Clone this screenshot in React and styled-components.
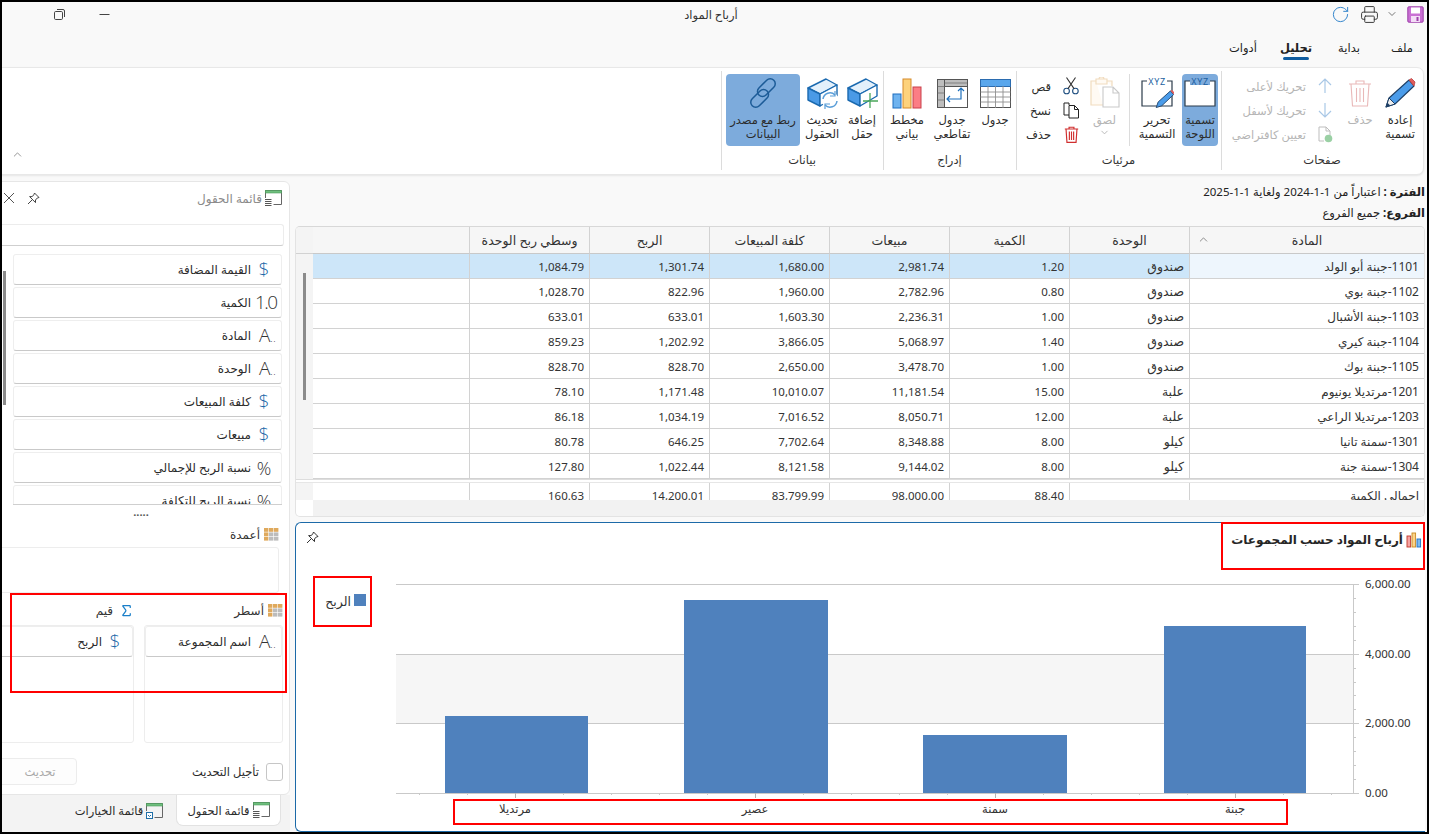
import React from 'react';
import styled, { createGlobalStyle } from 'styled-components';
import { RotateCw, Printer, ChevronDown, ChevronUp, Sigma } from 'lucide-react';

const Global = createGlobalStyle`
  html, body { margin: 0; padding: 0; background: #fff; }
  body { font-family: "Noto Sans", "DejaVu Sans", sans-serif; font-size: 12px; color: #2b2b2b; }
  * { box-sizing: border-box; }
`;

const Frame = styled.div`
  position: relative; width: 1429px; height: 834px; overflow: hidden;
  border: 2px solid #000; background: #f9f9f9; display: flex; flex-direction: column;
`;
const TitleBar = styled.header`
  height: 28px; flex: none; display: grid; grid-template-columns: 1fr auto 1fr; align-items: center; direction: ltr; padding-bottom: 4px;
`;
const WinButtons = styled.div`display: flex; align-items: center; gap: 34px; padding-left: 52px; color: #444;`;
const WinTitle = styled.div`font-size: 11.5px; color: #333; text-align: center; padding-right: 7px;`;
const QuickTools = styled.div`display: flex; justify-content: flex-end; align-items: center; padding-right: 3px;`;
const ToolSlot = styled.span`display: flex; margin-right: ${p => p.$mr || 0}px;`;
const TabRow = styled.nav`
  height: 37px; flex: none; display: flex; direction: rtl; gap: 3px; padding-top: 5px;
`;
const Tab = styled.div`
  width: 50px; height: 25px; display: flex; align-items: center; justify-content: center; position: relative;
  font-size: 11.5px; font-weight: ${p => (p.$active ? 700 : 400)}; color: #222;
  &::after { content: ""; display: ${p => (p.$active ? 'block' : 'none')}; position: absolute; bottom: 0; left: 12px; right: 12px; height: 3px; border-radius: 2px; background: #0f5c9f; }
`;
const Ribbon = styled.section`
  height: 108px; flex: none; margin: 0 3px 0 -6px; display: flex; direction: rtl; position: relative;
  background: #fff; border: 1px solid #e8e8e8; border-radius: 7px; box-shadow: 0 1px 2px rgba(0,0,0,.08);
`;
const Group = styled.div`
  display: flex; flex-direction: column; width: ${p => p.$w}px; flex: none; padding: 6px 3px 0 3px; position: relative;
  &::after { content: ""; position: absolute; left: 0; top: 3px; bottom: 4px; width: 1px; background: #dcdcdc; }
`;
const GroupBody = styled.div`display: flex; height: 72px;`;
const GroupLabel = styled.div`text-align: center; font-size: 11.5px; color: #333; padding-top: 6px;`;
const BigButton = styled.div`
  width: ${p => p.$w}px; flex: none; height: 72px; display: flex; flex-direction: column; align-items: center;
  padding-top: 3px; border-radius: 4px; background: ${p => (p.$on ? '#7dabdc' : 'transparent')};
  color: ${p => (p.$off ? '#b5b5b5' : '#2b2b2b')}; font-size: 11.5px; line-height: 14px; text-align: center;
`;
const BigIcon = styled.div`height: 32px; flex: none; margin-bottom: 4px; display: flex; align-items: center; justify-content: center;`;
const GroupSep = styled.div`width: 1px; flex: none; background: #dcdcdc; margin: 0 2px 0 1px;`;
const SmallColumn = styled.div`width: ${p => p.$w}px; flex: none; display: flex; flex-direction: column; padding-top: 0;`;
const SmallButton = styled.div`
  height: 25px; display: flex; align-items: center; gap: ${p => p.$gap || 8}px; padding-right: ${p => p.$pad || 6}px;
  color: ${p => (p.$off ? '#b5b5b5' : '#2b2b2b')}; font-size: 11.5px; white-space: nowrap;
`;
const SmallIcon = styled.span`width: 18px; flex: none; display: flex; justify-content: center;`;
const Collapse = styled.span`position: absolute; left: 14px; bottom: 13px; color: #777; display: flex;`;

const Workspace = styled.main`flex: 1; min-height: 0; display: flex; direction: ltr; padding-top: 6px;`;
const LeftCol = styled.aside`width: 288px; flex: none; display: flex; flex-direction: column; direction: rtl; overflow: hidden;`;
const PanelCard = styled.div`
  flex: 1; min-height: 0; margin-left: -10px; background: #fff; border: 1px solid #e6e6e6; border-radius: 6px; display: flex; flex-direction: column; position: relative; overflow: hidden;
`;
const PanelHead = styled.div`height: 34px; flex: none; display: flex; align-items: center; padding: 0 7px 2px; gap: 3px; color: #8a8a8a; font-size: 12px;`;
const HeadSpacer = styled.div`flex: 1;`;
const HeadTool = styled.span`display: flex; margin-left: ${p => p.$ml || 0}px; color: #666;`;
const SearchBox = styled.div`height: 22px; flex: none; margin: 8px 5px 8px 0; background: #fff; border: 1px solid #ececec; border-bottom-color: #cfcfcf; border-radius: 3px;`;
const FieldList = styled.div`height: 251px; flex: none; overflow: hidden; margin: 0 7px 0 20px; display: flex; flex-direction: column; gap: 2px; border-bottom: 1px solid #cfcfcf;`;
const FieldCard = styled.div`
  height: 31px; flex: none; background: #fff; border: 1px solid #eeeeee; border-bottom: 1px solid #c9c9c9; border-radius: 3px;
  display: flex; align-items: center; padding-right: 8px; gap: 4px; font-size: 12px; color: #2b2b2b;
`;
const TypeGlyph = styled.span`
  width: 18px; flex: none; text-align: center; direction: ltr; font-family: "Open Sans", sans-serif; font-weight: 300; font-size: ${p => p.$s || 19}px; letter-spacing: ${p => p.$ls || 0}px; line-height: 1; color: ${p => p.$c || '#333'}; white-space: nowrap;
`;
const TinyDots = styled.span`font-size: 10px; letter-spacing: .5px; margin-right: -7px;`;
const Thumb = styled.div`position: absolute; left: 10px; top: 89px; width: 3px; height: 134px; background: #8b8b8b;`;
const Grip = styled.div`height: 18px; flex: none; display: flex; align-items: center; justify-content: center; color: #555; font-size: 11px; line-height: 1; font-weight: 700; padding-bottom: 6px;`;
const ZoneLabel = styled.div`height: 22px; flex: none; display: flex; align-items: center; gap: ${p => p.$gap ?? 4}px; padding-right: ${p => p.$pad ?? 10}px; font-size: 12px; color: #333;`;
const ColumnsZone = styled.div`height: 46px; flex: none; margin: 2px 10px 6px 0; border: 1px solid #ededed; border-radius: 3px;`;
const Zones = styled.div`display: flex; gap: 10px; padding-right: 6px; flex: none;`;
const Zone = styled.div`width: ${p => p.$w}px; flex: none;`;
const ZoneBox = styled.div`height: 118px; margin-top: 4px; border: 1px solid #ededed; border-radius: 3px;`;
const PanelFoot = styled.div`display: flex; align-items: center; justify-content: flex-start; height: 27px; margin-top: 15px; padding-right: 6px; gap: 7px; font-size: 11.5px; flex: none;`;
const Check = styled.span`width: 17px; height: 18px; flex: none; border: 1px solid #c6c6c6; border-radius: 3px; background: #fff;`;
const FootButton = styled.div`margin-right: auto; width: 84px; height: 27px; padding-left: 10px; border: 1px solid #ececec; border-radius: 4px; display: flex; align-items: center; justify-content: center; color: #aaa; background: #fdfdfd;`;
const BottomTabs = styled.div`height: 37px; flex: none; display: flex; background: #f3f3f3; padding-right: 9px; gap: 11px; margin-left: -10px;`;
const BottomTab = styled.div`
  width: ${p => p.$w}px; height: 31px; flex: none; display: flex; align-items: center; justify-content: center; gap: 3px; font-size: 11.5px;
  ${p => p.$active && 'background:#fff;border:1px solid #e2e2e2;border-top:0;border-radius:0 0 7px 7px;'}
`;

const RightCol = styled.div`width: 1130px; margin-left: 5px; flex: none; display: flex; flex-direction: column;`;
const InfoBlock = styled.div`height: 45px; flex: none; direction: rtl; font-size: 11.5px; color: #222;`;
const InfoLine = styled.div`height: 21px; display: flex; align-items: center; gap: 3px;`;
const InfoKey = styled.b`font-weight: 700;`;
const TableBox = styled.div`height: 291px; flex: none; direction: rtl; display: flex; flex-direction: column; position: relative; overflow: hidden; background: #fff; border: 1px solid #e3e3e3; border-top-color: #d8d8d8; border-radius: 5px;`;
const GridRow = styled.div`
  display: grid; flex: none; height: ${p => p.$h || 25}px; grid-template-columns: 235px repeat(6, 120px) 156px 17px;
`;
const Cell = styled.div`
  display: flex; align-items: center; padding: 0 5px; font-size: ${p => p.$fs || 11.5}px; color: #333; white-space: nowrap; overflow: hidden;
  border-left: ${p => (p.$open ? '0' : '1px solid #d2d2d2')}; border-bottom: 1px solid #d2d2d2; background: ${p => p.$bg || '#fff'};
`;
const HeadCell = styled(Cell)`
  justify-content: center; position: relative; background: #f6f6f6; color: #333; border-bottom-color: #c9c9c9; font-size: 12.5px;
`;
const SortMark = styled.span`position: absolute; left: 7px; top: 6px; color: #555; display: flex;`;
const Gutter = styled.div`background: #f4f4f4; border-bottom: ${p => (p.$line ? '1px solid #d2d2d2' : '0')};`;
const TableThumb = styled.div`position: absolute; left: 7px; top: 46px; width: 3px; height: 127px; background: #8b8b8b;`;
const SummaryGap = styled.div`height: 4px; flex: none; background: #fff; border-top: 1px solid #ddd;border-bottom: 1px solid #e6e6e6;`;
const SummaryClip = styled.div`height: 17px; flex: none; overflow: hidden;`;
const HScroll = styled.div`flex: 1; background: #f2f2f2; margin-left: 17px;`;

const ChartPanel = styled.section`
  flex: 1; min-height: 0; margin-top: 5px; display: flex; flex-direction: column; background: #fff; border: 1px solid #1c6aa8; border-right: 0; border-radius: 6px 0 0 6px;
`;
const ChartHead = styled.div`height: 47px; flex: none; display: flex; direction: rtl; align-items: flex-start; padding: 8px 3px 0 10px;`;
const ChartTitle = styled.h2`margin: 0; display: flex; align-items: center; gap: 3px; font-size: 12px; font-weight: 700; color: #262626; height: 17px;`;
const PinWrap = styled.span`margin-right: auto; display: flex; color: #333;`;
const ChartBody = styled.div`flex: 1; min-height: 0; display: flex; direction: ltr;`;
const Legend = styled.div`width: 100px; flex: none; direction: rtl; display: flex; align-items: flex-start; padding: 23px 30px 0 0; gap: 3px; font-size: 12.5px; color: #333;`;
const LegendSwatch = styled.span`width: 12px; height: 12px; flex: none; background: #4f81bd; margin-top: 1px;`;
const Plot = styled.svg`display: block; flex: none;`;
const Mark = styled.div`
  position: absolute; left: ${p => p.$x - 2}px; top: ${p => p.$y - 2}px; width: ${p => p.$w}px; height: ${p => p.$h}px; border: 2px solid #f00; pointer-events: none;
`;

/* ---------- drawings ---------- */
const PencilGlyph = ({ s = 32 }) => (
  <svg width={s} height={s} viewBox="0 0 32 32">
    <path d="M2 30 L5 21 L25 3 L30 9 L11 27 Z" fill="#4b9cea" stroke="#1d3f66" strokeWidth="1.1" strokeLinejoin="round" />
    <path d="M25 3 L27.5 1.5 L31 5 L30 9 Z" fill="#e25c5c" stroke="#b94040" strokeWidth=".8" />
    <path d="M2 30 L5 21 L11 27 Z" fill="#eee" stroke="#1d3f66" strokeWidth="1" />
    <path d="M2 30 L3.4 25.8 L6.2 28.4 Z" fill="#1d3f66" />
  </svg>
);
const LabelFrame = ({ pencil }) => (
  <svg width="34" height="32" viewBox="0 0 34 32">
    <rect x="2" y="4" width="30" height="25" fill="#fff" />
    <rect x="7" y="0" width="20" height="8" fill={pencil ? '#fff' : '#7dabdc'} />
    <path d="M7 4 H2 V29 H32 V4 H27" fill="none" stroke="#2b3b4a" strokeWidth="1.2" />
    <text x="17" y="7.5" textAnchor="middle" fontSize="9" letterSpacing=".6" fill="#1d5fa0" fontFamily="Noto Sans">XYZ</text>
    {pencil && (
      <g transform="translate(15 12) scale(.62)">
        <path d="M2 30 L5 21 L25 3 L30 9 L11 27 Z" fill="#4b9cea" stroke="#1d3f66" strokeWidth="1.4" />
        <path d="M25 3 L27.5 1.5 L31 5 L30 9 Z" fill="#e25c5c" />
      </g>
    )}
  </svg>
);
const Trash = ({ c, s = 28, w = 1.1 }) => (
  <svg width={s} height={s} viewBox="0 0 28 28" fill="none" stroke={c} strokeWidth={w}>
    <path d="M3 5 H25 M10 5 V2 H18 V5 M5 5 L6.5 27 H21.5 L23 5 M10.5 9 V23 M14 9 V23 M17.5 9 V23" />
  </svg>
);
const ThinArrow = ({ down }) => (
  <svg width="14" height="16" viewBox="0 0 14 16" fill="none" stroke="#a9c8e6" strokeWidth="1.2" style={{ transform: down ? 'rotate(180deg)' : 'none' }}>
    <path d="M7 15 V1 M1 7 L7 1 L13 7" />
  </svg>
);
const DocCheck = () => (
  <svg width="16" height="17" viewBox="0 0 16 17" fill="none">
    <path d="M2 1 H9 L13 5 V9 M2 1 V15 H7 M9 1 V5 H13" stroke="#bdbdbd" />
    <circle cx="11.5" cy="12.5" r="3.8" fill="#9ad0a4" />
  </svg>
);
const Clipboard = () => (
  <svg width="32" height="32" viewBox="0 0 32 32" fill="none">
    <path d="M7 4 H2 V28 H14 M18 4 H23 V9 M7 2 H18 V7 H7 Z M10 2 A2.5 2 0 0 1 15 2" stroke="#f1dcbf" strokeWidth="1.2" fill="#fffaf3" />
    <path d="M14 10 H24 L30 16 V30 H14 Z M24 10 V16 H30" stroke="#c9c9c9" strokeWidth="1.1" fill="#fff" />
  </svg>
);
const ScissorsGlyph = () => (
  <svg width="16" height="18" viewBox="0 0 16 18" fill="none" stroke="#1f4f80" strokeWidth="1.1">
    <circle cx="3.6" cy="14" r="2.8" /><circle cx="12.4" cy="14" r="2.8" />
    <path d="M5 11.6 L12.5 .5 M11 11.6 L3.5 .5" stroke="#333" />
  </svg>
);
const CopyGlyph = () => (
  <svg width="17" height="17" viewBox="0 0 17 17" fill="none" stroke="#222" strokeWidth="1">
    <path d="M6 3 V1 H1 V13 H6" /><path d="M6 3.5 H11.5 L15.5 7.5 V16 H6 Z M11.5 3.5 V7.5 H15.5" />
  </svg>
);
const TableGlyph = () => (
  <svg width="31" height="29" viewBox="0 0 31 29">
    <rect x=".5" y=".5" width="30" height="28" fill="#fff" stroke="#555" />
    <rect x=".5" y=".5" width="30" height="7" fill="#5aa7ec" stroke="#2b6cb0" />
    <path d="M.5 13 H30.5 M.5 18 H30.5 M.5 23 H30.5 M8 7 V29 M15.5 7 V29 M23 7 V29" stroke="#8e8e8e" strokeWidth=".9" />
  </svg>
);
const PivotGlyph = () => (
  <svg width="31" height="29" viewBox="0 0 31 29">
    <rect x=".5" y=".5" width="30" height="28" fill="#fff" stroke="#555" />
    <rect x=".5" y=".5" width="30" height="7" fill="#bdbdbd" stroke="#555" />
    <rect x=".5" y=".5" width="7" height="28" fill="#bdbdbd" stroke="#555" />
    <path d="M.5 7.5 H8 M.5 14 H8 M.5 21 H8 M7.5 4 H30" stroke="#666" strokeWidth=".7" />
    <path d="M24 10 V20 H10 M21 12 L24 9 L27 12 M13 17 L10 20 L13 23" fill="none" stroke="#1d6fbb" strokeWidth="1.2" />
  </svg>
);
const BarsGlyph = ({ s = 1 }) => (
  <svg width={30 * s} height={31 * s} viewBox="0 0 30 31">
    <rect x="1" y="16" width="8" height="14" fill="#6fb3ef" stroke="#1f6fc0" />
    <rect x="11" y="1" width="8" height="29" fill="#fdd27c" stroke="#d58a2a" />
    <rect x="21" y="9" width="8" height="21" fill="#fb7d85" stroke="#c9414a" />
  </svg>
);
const TitleBars = () => (
  <svg width="16" height="16" viewBox="0 0 16 16">
    <rect x="1" y="4" width="3.6" height="11" fill="#f5a3a3" stroke="#c0392b" strokeWidth=".9" />
    <rect x="6" y="1" width="3.6" height="14" fill="#fbd38a" stroke="#c98a20" strokeWidth=".9" />
    <rect x="11" y="7" width="3.6" height="8" fill="#7db9ee" stroke="#1f6fc0" strokeWidth=".9" />
  </svg>
);
const BoxBase = () => (
  <>
    <path d="M2 11 L20 2 L31 8 L14 17 Z" fill="#e3f0fb" stroke="#1b6ab0" strokeWidth="1.4" strokeLinejoin="round" />
    <path d="M2 11 L14 17 V29 L2 23 Z" fill="#4a9ae6" stroke="#1b6ab0" strokeWidth="1.4" strokeLinejoin="round" />
    <path d="M14 17 L31 8 V19 L14 29 Z" fill="#fff" stroke="#1b6ab0" strokeWidth="1.4" strokeLinejoin="round" />
  </>
);
const BoxPlus = () => (
  <svg width="33" height="32" viewBox="0 0 33 32">
    <BoxBase />
    <path d="M24 16 V31 M17 24 H32" stroke="#4aa65a" strokeWidth="1.3" />
  </svg>
);
const BoxRefresh = () => (
  <svg width="33" height="32" viewBox="0 0 33 32">
    <BoxBase />
    <circle cx="24" cy="23" r="8.5" fill="#fff" />
    <path d="M17 22 A7 7 0 0 1 29 18 M31 24 A7 7 0 0 1 19 28" fill="none" stroke="#5a9ed8" strokeWidth="1.5" />
    <path d="M29 14 V19 H24 M19 32 V27 H24" fill="none" stroke="#5a9ed8" strokeWidth="1.2" />
  </svg>
);
const LinkGlyph = () => (
  <svg width="32" height="32" viewBox="0 0 32 32" fill="none" stroke="#1c5b97" strokeWidth="1.5">
    <rect x="14" y="0" width="10" height="21" rx="5" transform="rotate(45 19 11)" />
    <rect x="8" y="11" width="10" height="21" rx="5" transform="rotate(45 13 21)" />
  </svg>
);
const PinGlyph = ({ c = '#444' }) => (
  <svg width="13" height="13" viewBox="0 0 13 13" fill="none" stroke={c} strokeWidth="1">
    <path d="M7.5 1 L12 5.5 L10.3 6 L8.5 8 L8.5 10.6 L2.6 4.6 L5 4.6 L7 2.7 Z M5 8 L1 12" />
  </svg>
);
const CloseGlyph = () => (
  <svg width="12" height="12" viewBox="0 0 12 12" stroke="#555" strokeWidth="1"><path d="M1 1 L11 11 M11 1 L1 11" /></svg>
);
const PanelGlyph = ({ check }) => (
  <svg width="17" height="16" viewBox="0 0 17 16" fill="none">
    <path d="M.5 8 V.5 H16.5 V14.5 H8.5" stroke="#666" />
    <rect x=".5" y=".5" width="16" height="2.5" fill="#6fbf7e" stroke="#4a9c5a" strokeWidth=".6" />
    {check
      ? <><rect x=".5" y="9.5" width="6" height="6" fill="#fff" stroke="#1f6fa8" /><path d="M2 12 L3.5 13.5 L5 12" stroke="#1f6fa8" /></>
      : <path d="M0 9.5 H6.5 M0 11.5 H6.5 M0 13.5 H6.5 M0 15.5 H6.5" stroke="#444" strokeWidth=".9" />}
  </svg>
);
const CellsGlyph = () => (
  <svg width="15" height="13" viewBox="0 0 15 13">
    {[0, 1, 2].flatMap(r => [0, 1, 2].map(c => (
      <rect key={`${r}${c}`} x={c * 5} y={r * 4.4} width="4.4" height="3.8" fill={c === 0 || r === 0 ? '#dfa95c' : '#bcbcbc'} />
    )))}
  </svg>
);
const SaveGlyph = () => (
  <svg width="17" height="17" viewBox="0 0 17 17">
    <rect x=".8" y=".8" width="15.4" height="15.4" fill="#c96fd3" stroke="#9c3fa8" strokeWidth="1" rx="1" />
    <rect x="4" y="1.5" width="9" height="6" fill="#fff" />
    <rect x="4" y="10" width="9" height="6" fill="#f3dcf6" />
    <rect x="9.5" y="11" width="2" height="4" fill="#9c3fa8" />
  </svg>
);
const RestoreGlyph = () => (
  <svg width="11" height="11" viewBox="0 0 11 11" fill="none" stroke="#444"><rect x=".5" y="2.5" width="8" height="8" rx="1.2" /><path d="M3 .5 H9 A1.5 1.5 0 0 1 10.5 2 V8" /></svg>
);
const MinGlyph = () => <svg width="11" height="11" viewBox="0 0 11 11" stroke="#444"><path d="M.5 5.5 H10.5" /></svg>;

/* ---------- data ---------- */
const columns = ['المادة', 'الوحدة', 'الكمية', 'مبيعات', 'كلفة المبيعات', 'الربح', 'وسطي ربح الوحدة'];
const rows = [
  ['1101-جبنة أبو الولد', 'صندوق', '1.20', '2,981.74', '1,680.00', '1,301.74', '1,084.79'],
  ['1102-جبنة بوي', 'صندوق', '0.80', '2,782.96', '1,960.00', '822.96', '1,028.70'],
  ['1103-جبنة الأشبال', 'صندوق', '1.00', '2,236.31', '1,603.30', '633.01', '633.01'],
  ['1104-جبنة كيري', 'صندوق', '1.40', '5,068.97', '3,866.05', '1,202.92', '859.23'],
  ['1105-جبنة بوك', 'صندوق', '1.00', '3,478.70', '2,650.00', '828.70', '828.70'],
  ['1201-مرتديلا يونيوم', 'علبة', '15.00', '11,181.54', '10,010.07', '1,171.48', '78.10'],
  ['1203-مرتديلا الراعي', 'علبة', '12.00', '8,050.71', '7,016.52', '1,034.19', '86.18'],
  ['1301-سمنة تانيا', 'كيلو', '8.00', '8,348.88', '7,702.64', '646.25', '80.78'],
  ['1304-سمنة جنة', 'كيلو', '8.00', '9,144.02', '8,121.58', '1,022.44', '127.80'],
];
const summary = ['إجمالي الكمية', '', '88.40', '98,000.00', '83,799.99', '14,200.01', '160.63'];
const cellSize = i => (i === 0 ? 12 : i === 1 ? 12.5 : 11.5);
const Dollar = <TypeGlyph $c="#1f6aa8">$</TypeGlyph>;
const Percent = <TypeGlyph $s={18}>%</TypeGlyph>;
const Letter = <TypeGlyph>A<TinyDots>..</TinyDots></TypeGlyph>;
const Num = <TypeGlyph $s={19} $ls={-1.5}>1.0</TypeGlyph>;
const fields = [
  [Dollar, 'القيمة المضافة'], [Num, 'الكمية'], [Letter, 'المادة'], [Letter, 'الوحدة'],
  [Dollar, 'كلفة المبيعات'], [Dollar, 'مبيعات'], [Percent, 'نسبة الربح للإجمالي'], [Percent, 'نسبة الربح للتكلفة'],
];
const bars = [[445, 588, 716], [684, 828, 600], [923, 1067, 735], [1164, 1306, 626]];
const cats = [[515, 'مرتديلا'], [755, 'عصير'], [995, 'سمنة'], [1235, 'جبنة']];
const yLabels = [[584, '6,000.00'], [654, '4,000.00'], [723, '2,000.00'], [793, '0.00']];

const Chart = () => {
  const yMinor = [];
  for (let g = 0; g < 3; g++) for (let i = 1; i < 5; i++) yMinor.push(584 + g * 69.67 + i * 13.93);
  const xMinor = [];
  for (let x = 397 + 22; x < 1353; x += 48) xMinor.push(x);
  return (
    <Plot width="1028" height="261" viewBox="396 570 1028 261">
      <rect x="396" y="654" width="957" height="69" fill="#f6f6f6" />
      {yLabels.map(([y]) => <path key={y} d={`M396 ${y}.5 H1359`} stroke="#c9c9c9" />)}
      <path d="M1353.5 584 V793" stroke="#c9c9c9" />
      {yMinor.map(y => <path key={y} d={`M1353 ${Math.round(y)}.5 H1356`} stroke="#c9c9c9" />)}
      {bars.map(([a, b, t]) => <rect key={a} x={a} y={t} width={b - a} height={793 - t} fill="#4f81bd" />)}
      {xMinor.map(x => <path key={x} d={`M${x}.5 793 V795`} stroke="#c9c9c9" />)}
      {cats.map(([x]) => <path key={x} d={`M${x}.5 793 V798`} stroke="#b5b5b5" />)}
      {cats.map(([x, t]) => <text key={t} x={x} y="813" fontSize="11.5" textAnchor="middle" fill="#333" direction="rtl">{t}</text>)}
      {yLabels.map(([y, t]) => <text key={t} x="1365" y={y + 4} fontSize="11.5" fill="#333">{t}</text>)}
    </Plot>
  );
};

export default function App() {
  return (
    <>
      <Global />
      <Frame>
        <TitleBar>
          <WinButtons><RestoreGlyph /><MinGlyph /></WinButtons>
          <WinTitle dir="rtl">أرباح المواد</WinTitle>
          <QuickTools>
            <ToolSlot $mr={10}><RotateCw size={19} color="#2a7fc9" strokeWidth={1.2} /></ToolSlot>
            <ToolSlot $mr={7}><Printer size={19} color="#333" strokeWidth={1.2} /></ToolSlot>
            <ToolSlot $mr={9}><ChevronDown size={12} color="#777" /></ToolSlot>
            <SaveGlyph />
          </QuickTools>
        </TitleBar>
        <TabRow>
          <Tab>ملف</Tab><Tab>بداية</Tab><Tab $active>تحليل</Tab><Tab>أدوات</Tab>
        </TabRow>
        <Ribbon>
          <Group $w={202}>
            <GroupBody>
              <BigButton $w={40}><BigIcon><PencilGlyph /></BigIcon>إعادة<br />تسمية</BigButton>
              <BigButton $w={40} $off><BigIcon><Trash c="#e9b8b8" /></BigIcon>حذف</BigButton>
              <SmallColumn $w={114}>
                <SmallButton $off $gap={10}><SmallIcon><ThinArrow /></SmallIcon>تحريك لأعلى</SmallButton>
                <SmallButton $off $gap={10}><SmallIcon><ThinArrow down /></SmallIcon>تحريك لأسفل</SmallButton>
                <SmallButton $off $gap={10}><SmallIcon><DocCheck /></SmallIcon>تعيين كافتراضي</SmallButton>
              </SmallColumn>
            </GroupBody>
            <GroupLabel>صفحات</GroupLabel>
          </Group>
          <Group $w={205}>
            <GroupBody>
              <BigButton $w={36} $on><BigIcon><LabelFrame /></BigIcon>تسمية<br />اللوحة</BigButton>
              <BigButton $w={50}><BigIcon><LabelFrame pencil /></BigIcon>تحرير<br />التسمية</BigButton>
              <GroupSep />
              <BigButton $w={47} $off><BigIcon><Clipboard /></BigIcon>لصق<ChevronDown size={11} /></BigButton>
              <SmallColumn $w={62}>
                <SmallButton $pad={1} $gap={11}><SmallIcon><ScissorsGlyph /></SmallIcon>قص</SmallButton>
                <SmallButton $pad={1} $gap={11}><SmallIcon><CopyGlyph /></SmallIcon>نسخ</SmallButton>
                <SmallButton $pad={1} $gap={11}><SmallIcon><Trash c="#d02f2f" s={17} w={1.9} /></SmallIcon>حذف</SmallButton>
              </SmallColumn>
            </GroupBody>
            <GroupLabel>مرئيات</GroupLabel>
          </Group>
          <Group $w={133}>
            <GroupBody>
              <BigButton $w={36}><BigIcon><TableGlyph /></BigIcon>جدول</BigButton>
              <BigButton $w={50}><BigIcon><PivotGlyph /></BigIcon>جدول<br />تقاطعي</BigButton>
              <BigButton $w={40}><BigIcon><BarsGlyph /></BigIcon>مخطط<br />بياني</BigButton>
            </GroupBody>
            <GroupLabel>إدراج</GroupLabel>
          </Group>
          <Group $w={162}>
            <GroupBody>
              <BigButton $w={36}><BigIcon><BoxPlus /></BigIcon>إضافة<br />حقل</BigButton>
              <BigButton $w={44}><BigIcon><BoxRefresh /></BigIcon>تحديث<br />الحقول</BigButton>
              <BigButton $w={74} $on><BigIcon><LinkGlyph /></BigIcon>ربط مع مصدر<br />البيانات</BigButton>
            </GroupBody>
            <GroupLabel>بيانات</GroupLabel>
          </Group>
          <Collapse><ChevronUp size={13} strokeWidth={1.4} /></Collapse>
        </Ribbon>
        <Workspace>
          <LeftCol>
            <PanelCard>
              <PanelHead>
                <PanelGlyph /><span>قائمة الحقول</span><HeadSpacer />
                <HeadTool $ml={9}><PinGlyph /></HeadTool>
                <HeadTool $ml={3}><CloseGlyph /></HeadTool>
              </PanelHead>
              <SearchBox />
              <FieldList>
                {fields.map(([g, t]) => <FieldCard key={t}>{g}<span>{t}</span></FieldCard>)}
              </FieldList>
              <Thumb />
              <Grip>.....</Grip>
              <ZoneLabel><CellsGlyph /><span>أعمدة</span></ZoneLabel>
              <ColumnsZone />
              <Zones>
                <Zone $w={139}>
                  <ZoneLabel $pad={0}><CellsGlyph /><span>أسطر</span></ZoneLabel>
                  <ZoneBox><FieldCard>{Letter}<span>اسم المجموعة</span></FieldCard></ZoneBox>
                </Zone>
                <Zone $w={146}>
                  <ZoneLabel $pad={0} $gap={6}><Sigma size={15} color="#1a7fc9" strokeWidth={2} /><span>قيم</span></ZoneLabel>
                  <ZoneBox><FieldCard>{Dollar}<span>الربح</span></FieldCard></ZoneBox>
                </Zone>
              </Zones>
              <PanelFoot><Check /><span>تأجيل التحديث</span><FootButton>تحديث</FootButton></PanelFoot>
            </PanelCard>
            <BottomTabs>
              <BottomTab $w={105} $active><PanelGlyph /><span>قائمة الحقول</span></BottomTab>
              <BottomTab $w={92}><PanelGlyph check /><span>قائمة الخيارات</span></BottomTab>
            </BottomTabs>
          </LeftCol>
          <RightCol>
            <InfoBlock>
              <InfoLine><InfoKey>الفترة :</InfoKey><span>اعتباراً من 1-1-2024 ولغاية 1-1-2025</span></InfoLine>
              <InfoLine><InfoKey>الفروع:</InfoKey><span>جميع الفروع</span></InfoLine>
            </InfoBlock>
            <TableBox>
              <GridRow $h={27}>
                {columns.map((c, i) => (
                  <HeadCell key={c}>{c}{i === 0 && <SortMark><ChevronUp size={13} strokeWidth={1.2} /></SortMark>}</HeadCell>
                ))}
                <HeadCell $open />
                <Gutter $line />
              </GridRow>
              {rows.map((r, ri) => (
                <GridRow key={r[0]}>
                  {r.map((v, i) => <Cell key={i} $fs={cellSize(i)} $bg={ri === 0 ? (i === 0 ? '#eef6fd' : '#cde6f9') : undefined}>{v}</Cell>)}
                  <Cell $open $bg={ri === 0 ? '#cde6f9' : undefined} />
                  <Gutter />
                </GridRow>
              ))}
              <SummaryGap />
              <SummaryClip>
                <GridRow>
                  {summary.map((v, i) => <Cell key={i} $fs={cellSize(i)}>{v}</Cell>)}
                  <Cell $open />
                  <Gutter />
                </GridRow>
              </SummaryClip>
              <HScroll />
              <TableThumb />
            </TableBox>
            <ChartPanel>
              <ChartHead>
                <ChartTitle><TitleBars /><span>أرباح المواد حسب المجموعات</span></ChartTitle>
                <PinWrap><PinGlyph c="#333" /></PinWrap>
              </ChartHead>
              <ChartBody>
                <Legend><LegendSwatch /><span>الربح</span></Legend>
                <Chart />
              </ChartBody>
            </ChartPanel>
          </RightCol>
        </Workspace>
        <Mark $x={10} $y={593} $w={277} $h={100} />
        <Mark $x={313} $y={576} $w={59} $h={51} />
        <Mark $x={1221} $y={522} $w={204} $h={48} />
        <Mark $x={453} $y={799} $w={835} $h={26} />
      </Frame>
    </>
  );
}
